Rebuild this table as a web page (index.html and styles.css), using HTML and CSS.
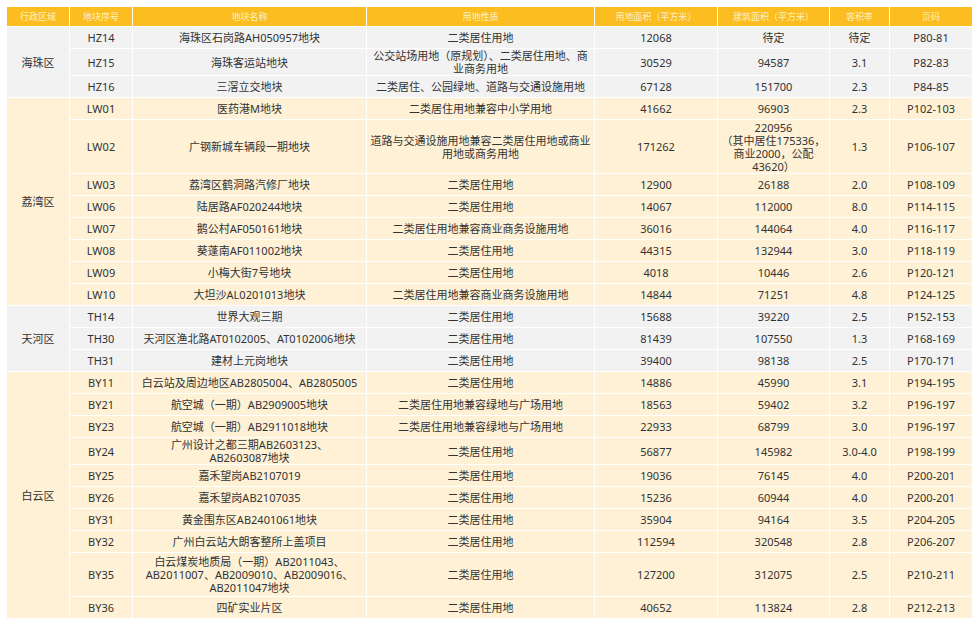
FILE: index.html
```html
<!DOCTYPE html>
<html lang="zh-CN">
<head>
<meta charset="utf-8">
<title>地块列表</title>
<link rel="stylesheet" href="styles.css">
</head>
<body>
<table class="plots">
  <colgroup>
    <col class="c-region"><col class="c-no"><col class="c-name"><col class="c-use">
    <col class="c-area"><col class="c-build"><col class="c-far"><col class="c-page">
  </colgroup>
  <thead>
    <tr class="head">
      <th>行政区域</th><th>地块序号</th><th>地块名称</th><th>用地性质</th>
      <th>用地面积（平方米）</th><th>建筑面积（平方米）</th><th>容积率</th><th>页码</th>
    </tr>
  </thead>
  <tbody class="grey">
    <tr><td class="region" rowspan="3">海珠区</td><td>HZ14</td><td>海珠区石岗路AH050957地块</td><td>二类居住用地</td><td>12068</td><td>待定</td><td>待定</td><td>P80-81</td></tr>
    <tr class="h25"><td>HZ15</td><td>海珠客运站地块</td><td>公交站场用地（原规划）、二类居住用地、商业商务用地</td><td>30529</td><td>94587</td><td>3.1</td><td>P82-83</td></tr>
    <tr><td>HZ16</td><td>三滘立交地块</td><td>二类居住、公园绿地、道路与交通设施用地</td><td>67128</td><td>151700</td><td>2.3</td><td>P84-85</td></tr>
  </tbody>
  <tbody class="yellow">
    <tr><td class="region" rowspan="8">荔湾区</td><td>LW01</td><td>医药港M地块</td><td>二类居住用地兼容中小学用地</td><td>41662</td><td>96903</td><td>2.3</td><td>P102-103</td></tr>
    <tr class="h55"><td>LW02</td><td>广钢新城车辆段一期地块</td><td>道路与交通设施用地兼容二类居住用地或商业用地或商务用地</td><td>171262</td><td>220956<br>（其中居住175336，<br>商业2000，公配<br>43620）</td><td>1.3</td><td>P106-107</td></tr>
    <tr><td>LW03</td><td>荔湾区鹤洞路汽修厂地块</td><td>二类居住用地</td><td>12900</td><td>26188</td><td>2.0</td><td>P108-109</td></tr>
    <tr><td>LW06</td><td>陆居路AF020244地块</td><td>二类居住用地</td><td>14067</td><td>112000</td><td>8.0</td><td>P114-115</td></tr>
    <tr><td>LW07</td><td>鹅公村AF050161地块</td><td>二类居住用地兼容商业商务设施用地</td><td>36016</td><td>144064</td><td>4.0</td><td>P116-117</td></tr>
    <tr><td>LW08</td><td>葵蓬南AF011002地块</td><td>二类居住用地</td><td>44315</td><td>132944</td><td>3.0</td><td>P118-119</td></tr>
    <tr><td>LW09</td><td>小梅大街7号地块</td><td>二类居住用地</td><td>4018</td><td>10446</td><td>2.6</td><td>P120-121</td></tr>
    <tr><td>LW10</td><td>大坦沙AL0201013地块</td><td>二类居住用地兼容商业商务设施用地</td><td>14844</td><td>71251</td><td>4.8</td><td>P124-125</td></tr>
  </tbody>
  <tbody class="grey">
    <tr><td class="region" rowspan="3">天河区</td><td>TH14</td><td>世界大观三期</td><td>二类居住用地</td><td>15688</td><td>39220</td><td>2.5</td><td>P152-153</td></tr>
    <tr><td>TH30</td><td>天河区渔北路AT0102005、AT0102006地块</td><td>二类居住用地</td><td>81439</td><td>107550</td><td>1.3</td><td>P168-169</td></tr>
    <tr><td>TH31</td><td>建材上元岗地块</td><td>二类居住用地</td><td>39400</td><td>98138</td><td>2.5</td><td>P170-171</td></tr>
  </tbody>
  <tbody class="yellow">
    <tr><td class="region" rowspan="10">白云区</td><td>BY11</td><td>白云站及周边地区AB2805004、AB2805005</td><td>二类居住用地</td><td>14886</td><td>45990</td><td>3.1</td><td>P194-195</td></tr>
    <tr><td>BY21</td><td>航空城（一期）AB2909005地块</td><td>二类居住用地兼容绿地与广场用地</td><td>18563</td><td>59402</td><td>3.2</td><td>P196-197</td></tr>
    <tr><td>BY23</td><td>航空城（一期）AB2911018地块</td><td>二类居住用地兼容绿地与广场用地</td><td>22933</td><td>68799</td><td>3.0</td><td>P196-197</td></tr>
    <tr class="h27"><td>BY24</td><td>广州设计之都三期AB2603123、<br>AB2603087地块</td><td>二类居住用地</td><td>56877</td><td>145982</td><td>3.0-4.0</td><td>P198-199</td></tr>
    <tr><td>BY25</td><td>嘉禾望岗AB2107019</td><td>二类居住用地</td><td>19036</td><td>76145</td><td>4.0</td><td>P200-201</td></tr>
    <tr><td>BY26</td><td>嘉禾望岗AB2107035</td><td>二类居住用地</td><td>15236</td><td>60944</td><td>4.0</td><td>P200-201</td></tr>
    <tr><td>BY31</td><td>黄金围东区AB2401061地块</td><td>二类居住用地</td><td>35904</td><td>94164</td><td>3.5</td><td>P204-205</td></tr>
    <tr><td>BY32</td><td>广州白云站大朗客整所上盖项目</td><td>二类居住用地</td><td>112594</td><td>320548</td><td>2.8</td><td>P206-207</td></tr>
    <tr class="h44"><td>BY35</td><td>白云煤炭地质局（一期）AB2011043、<br>AB2011007、AB2009010、AB2009016、<br>AB2011047地块</td><td>二类居住用地</td><td>127200</td><td>312075</td><td>2.5</td><td>P210-211</td></tr>
    <tr><td>BY36</td><td>四矿实业片区</td><td>二类居住用地</td><td>40652</td><td>113824</td><td>2.8</td><td>P212-213</td></tr>
  </tbody>
</table>
</body>
</html>
```

FILE: styles.css
```css
html, body {
  margin: 0;
  padding: 0;
  background: #ffffff;
}

body {
  padding: 7px;
  font-family: "Noto Sans", "Noto Sans CJK SC", sans-serif;
  color: #333333;
}

.plots {
  table-layout: fixed;
  width: 965px;
  border-collapse: separate;
  border-spacing: 0;
  font-size: 11px;
  line-height: 13px;
}

.c-region { width: 63px; }
.c-no { width: 63px; }
.c-name { width: 234px; }
.c-use { width: 228px; }
.c-area { width: 123px; }
.c-build { width: 112px; }
.c-far { width: 60px; }
.c-page { width: 82px; }

.plots th,
.plots td {
  text-align: center;
  vertical-align: middle;
  border-right: 1px solid #ffffff;
  border-bottom: 1px solid #ffffff;
  padding: 0 2px;
  box-sizing: border-box;
  white-space: normal;
}

.plots th:last-child,
.plots td:last-child {
  border-right: none;
}

.head {
  height: 20px;
}

.head th {
  background: #fbbd1f;
  color: #fff0c4;
  font-weight: normal;
  font-size: 9px;
  line-height: 11px;
}

.plots tbody tr {
  height: 22px;
}

.plots tbody tr.h25 { height: 25px; }
.plots tbody tr.h27 { height: 27px; }
.plots tbody tr.h44 { height: 44px; }
.plots tbody tr.h55 { height: 54px; }

.grey td {
  background: #f2f2f2;
}

.yellow td {
  background: #fef1d6;
}

.region {
  font-size: 11px;
}
```
